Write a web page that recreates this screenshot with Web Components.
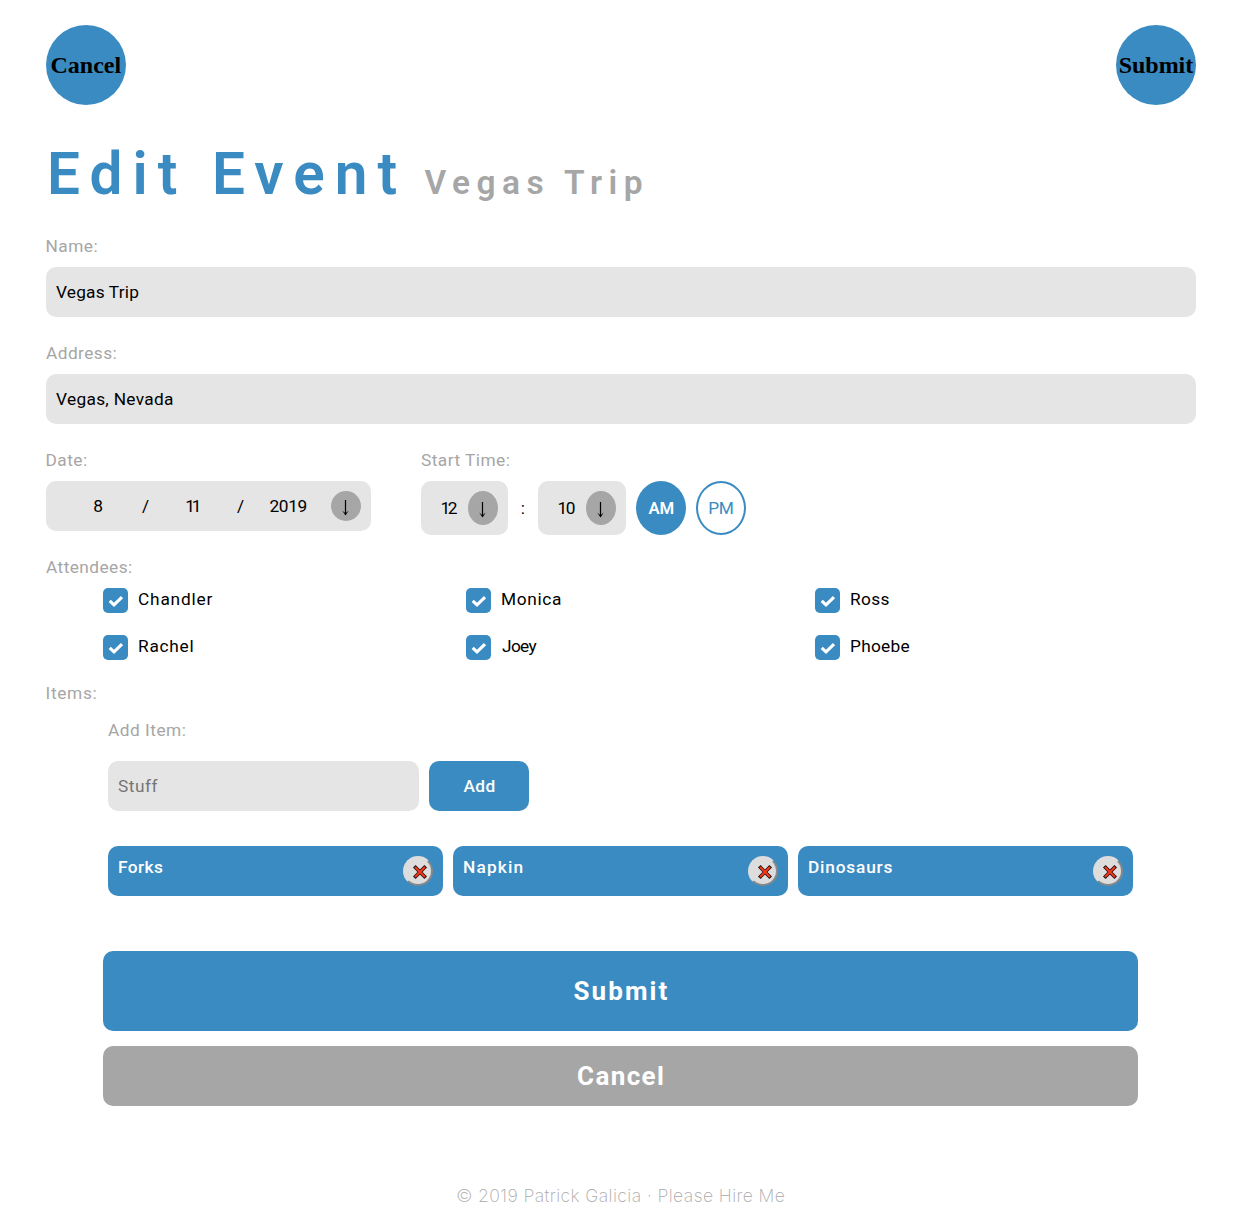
<!DOCTYPE html>
<html lang="en">
<head>
<meta charset="utf-8">
<title>Edit Event</title>
<style>
body{margin:0;background:#fff;font-family:Roboto,"Liberation Sans",sans-serif;font-size:17.3px;font-weight:400;color:#000}
</style>
</head>
<body>
<edit-event-page></edit-event-page>
<script>
const BLUE = '#3a8bc2', GREY = '#a6a6a6', PALE = '#e5e5e5';
const pen = document.createElement('canvas').getContext('2d');
class Base extends HTMLElement {
  connectedCallback() {
    if (this.shadowRoot) return;
    const root = this.attachShadow({ mode: 'open' });
    root.innerHTML = `<style>*{box-sizing:border-box}${this.css()}</style>${this.html()}`;
    this.ready?.();
  }
}
const a = (el, n, d = '') => el.getAttribute(n) ?? d;

/* One line of text, tracked so that its ink spans the width given in "w". */
customElements.define('tracked-text', class extends Base {
  css() {
    return `:host{display:block;flex:none;white-space:nowrap;line-height:20px;width:${a(this,'w')}px}
    span{display:block;width:max-content}`;
  }
  html() { return `<span>${a(this,'text')}</span>`; }
  ready() {
    const s = this.shadowRoot.querySelector('span'), c = getComputedStyle(s), t = a(this,'text');
    pen.font = `${c.fontWeight} ${c.fontSize} ${c.fontFamily}`;
    const m = pen.measureText(t);
    const ink = m.actualBoundingBoxRight + m.actualBoundingBoxLeft;
    if (t.length > 1) s.style.letterSpacing = (+a(this,'w') - ink) / (t.length - 1) + 'px';
    s.style.marginLeft = m.actualBoundingBoxLeft + 'px';
  }
});

customElements.define('round-button', class extends Base {
  css() {
    return `:host{display:block}button{width:80px;height:80px;border:0;border-radius:50%;background:${BLUE};padding:0 0 0 1px;
    display:flex;align-items:center;justify-content:center;font:bold 24px "Liberation Serif",serif;color:#000}`;
  }
  html() { return `<button><tracked-text text="${a(this,'text')}" w="${a(this,'w')}"></tracked-text></button>`; }
});

customElements.define('page-title', class extends Base {
  css() {
    return `h1{margin:0;display:flex;align-items:baseline;gap:28px;padding-left:4px;font-weight:650;font-size:58.5px;color:${BLUE}}
    .sub{font-size:33.5px;color:${GREY}}`;
  }
  html() {
    return `<h1><tracked-text text="Edit Event" w="346.5"></tracked-text><tracked-text class="sub" text="Vegas Trip" w="218"></tracked-text></h1>`;
  }
});

customElements.define('form-field', class extends Base {
  css() {
    return `:host{display:flex;flex-direction:column;gap:11px;color:#000}
    .label{color:${GREY};padding-left:${a(this,'dx','0')}px}`;
  }
  html() { return `<div class="label"><tracked-text text="${a(this,'label')}" w="${a(this,'lw')}"></tracked-text></div><slot></slot>`; }
});

customElements.define('text-box', class extends Base {
  css() {
    return `:host{display:flex;align-items:center;height:50px;border-radius:10px;background:${PALE};padding:0 10px;color:${a(this,'color','#000')}}`;
  }
  html() { return `<tracked-text text="${a(this,'text')}" w="${a(this,'w')}"></tracked-text>`; }
});

customElements.define('drop-arrow', class extends Base {
  css() {
    return `:host{display:flex;flex:none;align-items:center;justify-content:center;width:30px;background:${GREY};border-radius:50%;
    height:${a(this,'h','30')}px}svg{display:block}`;
  }
  html() {
    return `<svg width="30" height="30" viewBox="0 0 30 30"><path d="M14.5 9V23.6" fill="none" stroke="#000" stroke-width="1.2"/>
    <path d="M11.2 19.6L14.5 22.2L17.8 19.6L14.5 24.6Z" fill="#000"/></svg>`;
  }
});

customElements.define('date-picker', class extends Base {
  css() {
    return `:host{display:flex;width:325px;height:50px;border-radius:10px;background:${PALE};align-items:center;padding:0 10px}
    .c{width:75px;display:flex;justify-content:center}.s{width:20px;display:flex;justify-content:center}
    .m{width:79px;padding-left:5px}.d{width:75px}.y{flex:1;padding-right:5px}`;
  }
  html() {
    return `<div class="c m"><tracked-text text="8" w="9.6"></tracked-text></div><div class="s"><tracked-text text="/" w="6"></tracked-text></div>
    <div class="c d"><tracked-text text="11" w="12.3"></tracked-text></div><div class="s"><tracked-text text="/" w="6"></tracked-text></div>
    <div class="c y"><tracked-text text="2019" w="37"></tracked-text></div><drop-arrow></drop-arrow>`;
  }
});

customElements.define('time-part', class extends Base {
  css() {
    return `:host{display:flex;flex:none;box-sizing:border-box;width:${a(this,'box')}px;height:54px;border-radius:10px;background:${PALE};align-items:center;
    justify-content:space-between;padding:0 10px 0 20.5px}`;
  }
  html() { return `<tracked-text text="${a(this,'text')}" w="16.2"></tracked-text><drop-arrow h="34"></drop-arrow>`; }
});

customElements.define('meridiem-button', class extends Base {
  css() {
    return `:host{display:flex;flex:none;width:50px;height:54px;border-radius:50%;border:2px solid ${BLUE};box-sizing:border-box;
    align-items:center;justify-content:center;color:${BLUE}}
    :host([on]){background:${BLUE};color:#fff;font-weight:600;font-size:16.8px}`;
  }
  html() { return `<tracked-text text="${a(this,'text')}" w="${a(this,'w')}"></tracked-text>`; }
});

customElements.define('time-picker', class extends Base {
  css() { return `:host{display:flex;height:54px;gap:10px;align-items:center}.colon{width:10px;display:flex;justify-content:center}`; }
  html() {
    return `<time-part text="12" box="87"></time-part><div class="colon"><tracked-text text=":" w="2.5"></tracked-text></div>
    <time-part text="10" box="88"></time-part><meridiem-button on text="AM" w="24.8"></meridiem-button><meridiem-button text="PM" w="23.3"></meridiem-button>`;
  }
});

customElements.define('check-item', class extends Base {
  css() {
    return `:host{display:flex;gap:11px;height:25px}.b{width:25px;height:25px;border-radius:5px;background:${BLUE}}
    svg{display:block}tracked-text{margin-top:1px}`;
  }
  html() {
    return `<div class="b"><svg width="25" height="25" viewBox="0 0 25 25"><path d="M6.7 12.9L11 16.9L19 9.1" fill="none" stroke="#fff" stroke-width="3.1"/></svg></div>
    <tracked-text text="${a(this,'text')}" w="${a(this,'w')}"></tracked-text>`;
  }
});

customElements.define('attendee-grid', class extends Base {
  css() { return `:host{display:grid;grid-template-columns:363px 349px 1fr;row-gap:22px;padding-left:57px}`; }
  html() {
    return [['Chandler',73.5],['Monica',59],['Ross',38.5],['Rachel',53.5],['Joey',34.5],['Phoebe',58.5]]
      .map(([t, w]) => `<check-item text="${t}" w="${w}"></check-item>`).join('');
  }
});

customElements.define('item-card', class extends Base {
  css() {
    return `:host{display:flex;justify-content:space-between;height:50px;box-sizing:border-box;border-radius:10px;background:${BLUE};color:#fff;font-weight:500;padding:10px 10px 10px 11px}
    tracked-text{margin-top:1px}
    button{width:30px;height:30px;padding:0;border:2px solid;border-color:#ddd #888 #888 #ddd;border-radius:50%;background:#ddd}
    svg{display:block;margin:0 0 0 6px;transform:translateY(1px)}`;
  }
  html() {
    return `<tracked-text text="${a(this,'text')}" w="${a(this,'w')}"></tracked-text><button aria-label="Remove">
    <svg width="18" height="18" viewBox="0 0 18 18"><path d="M3.3 3.3L14.7 14.7M14.7 3.3L3.3 14.7" stroke="#201010" stroke-width="3.7"/><path d="M4 4L14 14M14 4L4 14" stroke="#f8371b" stroke-width="2"/></svg></button>`;
  }
});

customElements.define('item-editor', class extends Base {
  css() {
    return `:host{display:block;padding:0 63px 0 62px}
    .label{color:${GREY}}.row{display:flex;gap:10px;margin:21px 0 35px}
    text-box{width:311px;box-sizing:border-box}
    button{font:inherit;font-weight:500;color:#fff;background:${BLUE};border:0;border-radius:10px;width:100px;height:50px;padding:0;display:flex;align-items:center;justify-content:center}
    .cards{display:grid;grid-template-columns:repeat(3,1fr);gap:10px}`;
  }
  html() {
    return `<div class="label"><tracked-text text="Add Item:" w="77.7"></tracked-text></div>
    <div class="row"><text-box text="Stuff" w="40.5" color="#757575"></text-box><button><tracked-text text="Add" w="31"></tracked-text></button></div>
    <div class="cards"><item-card text="Forks" w="44"></item-card><item-card text="Napkin" w="58.5"></item-card><item-card text="Dinosaurs" w="83.5"></item-card></div>`;
  }
});

customElements.define('wide-button', class extends Base {
  css() {
    return `:host{display:block}button{width:100%;height:${a(this,'h')}px;border:0;border-radius:10px;background:${a(this,'bg')};color:#fff;
    font:inherit;font-weight:700;font-size:26px;display:flex;align-items:center;justify-content:center;padding:0}`;
  }
  html() { return `<button><tracked-text text="${a(this,'text')}" w="${a(this,'w')}"></tracked-text></button>`; }
});

customElements.define('page-footer', class extends Base {
  css() { return `:host{display:flex;justify-content:center;font:200 17.6px Inter,sans-serif;color:#aaa}`; }
  html() { return `<tracked-text text="© 2019 Patrick Galicia · Please Hire Me" w="327.5"></tracked-text>`; }
});

customElements.define('edit-event-page', class extends Base {
  css() {
    return `:host{display:block;box-sizing:border-box;height:1221px;padding:25px 45px 0 46px}
    header{display:flex;justify-content:space-between;height:80px}
    page-title{display:block;padding-top:59px;height:131px}
    .form{display:flex;flex-direction:column;gap:26px}
    .when{display:flex;gap:50px;height:81px}
    .att{gap:11px}.items{margin-top:-3px}
    item-editor{margin-top:6px}
    .actions{display:flex;flex-direction:column;gap:15px;padding:0 58px 0 57px;margin-top:55px}
    page-footer{margin-top:80px}`;
  }
  html() {
    return `<header><round-button text="Cancel" w="70"></round-button><round-button text="Submit" w="73.5"></round-button></header>
    <page-title></page-title>
    <div class="form">
      <form-field label="Name:" lw="51" dx="0.5"><text-box text="Vegas Trip" w="82.5"></text-box></form-field>
      <form-field label="Address:" lw="70.5"><text-box text="Vegas, Nevada" w="117"></text-box></form-field>
      <div class="when"><form-field label="Date:" lw="40.5" dx="0.5"><date-picker></date-picker></form-field>
      <form-field label="Start Time:" lw="89" dx="0"><time-picker></time-picker></form-field></div>
      <form-field class="att" label="Attendees:" lw="86"><attendee-grid></attendee-grid></form-field>
      <form-field class="items" label="Items:" lw="50" dx="0.5"><item-editor></item-editor></form-field>
    </div>
    <div class="actions"><wide-button text="Submit" w="94" h="80" bg="${BLUE}"></wide-button><wide-button text="Cancel" w="85" h="60" bg="${GREY}"></wide-button></div>
    <page-footer></page-footer>`;
  }
});
</script>
</body>
</html>
